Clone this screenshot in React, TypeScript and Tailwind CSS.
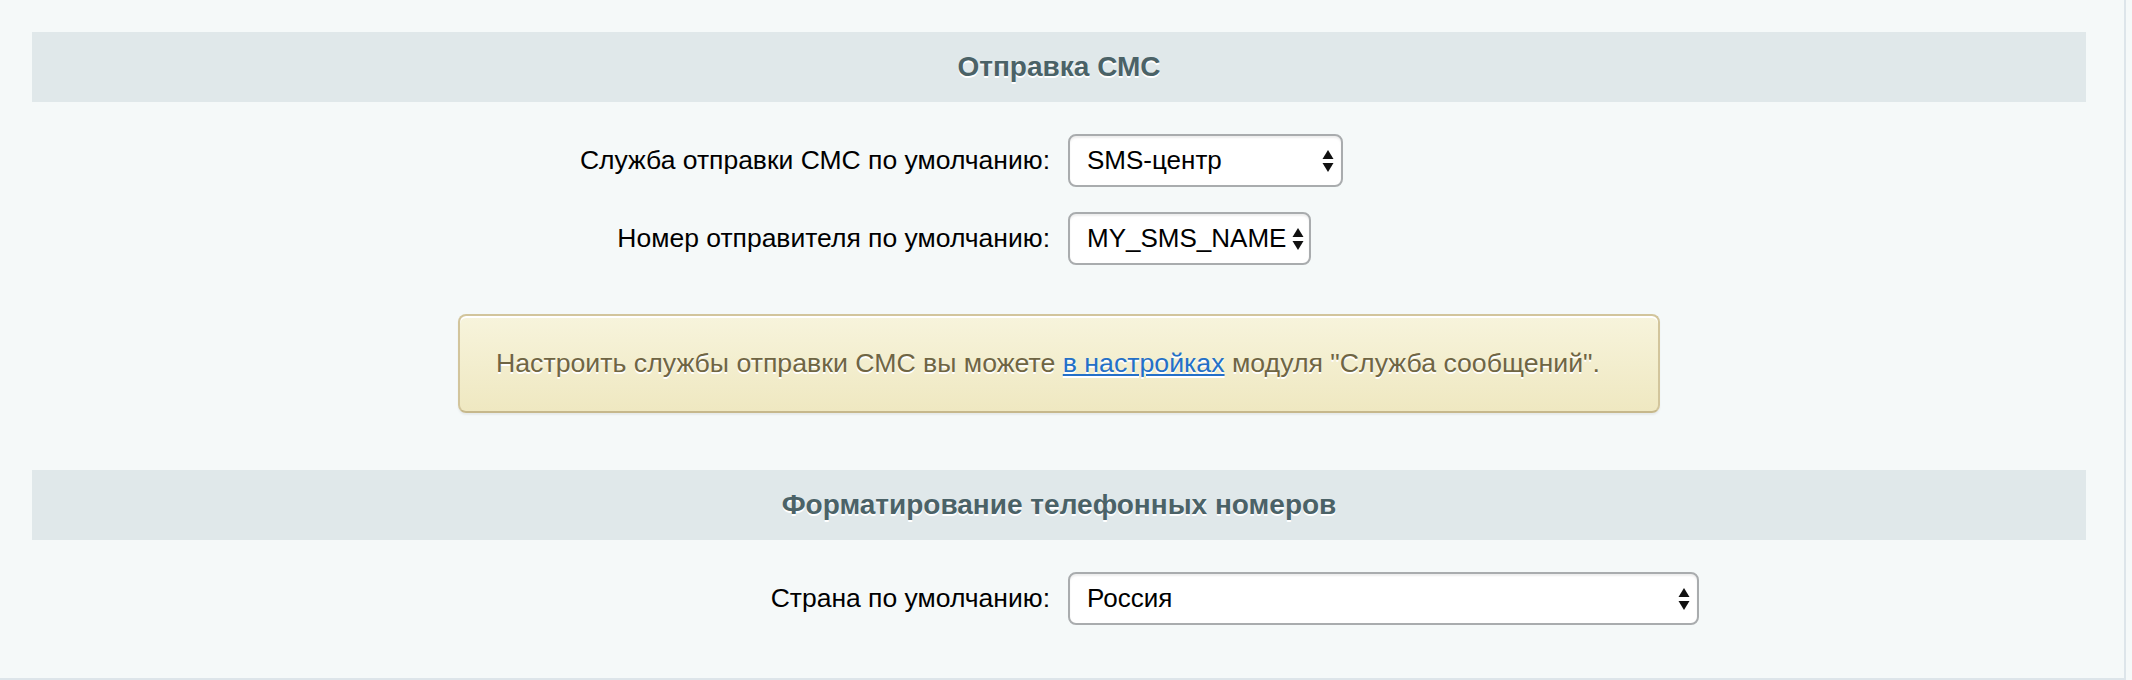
import { useState } from "react"

const font = "font-['Liberation_Sans',Arial,Helvetica,sans-serif]"

function Arrows({ right }: { right: string }) {
  return (
    <svg
      width="12"
      height="22"
      viewBox="0 0 12 22"
      className={`pointer-events-none absolute top-1/2 -translate-y-1/2 ${right}`}
    >
      <polygon points="0.5,9 6,0 11.5,9" fill="#111" />
      <polygon points="0.5,13 11.5,13 6,22" fill="#111" />
    </svg>
  )
}

function Select({
  width,
  value,
  options,
  tight = false,
}: {
  width: string
  value: string
  options: string[]
  tight?: boolean
}) {
  const [v, setV] = useState(value)
  return (
    <div className={`relative ${width}`}>
      <select
        value={v}
        onChange={(e) => setV(e.target.value)}
        className={`${font} h-[53px] w-full appearance-none rounded-[8px] border-2 border-[#a9acae] bg-white pl-[17px] text-[26px] text-black shadow-[inset_0_2px_2px_rgba(0,0,0,0.07)] outline-none ${
          tight ? "pr-[16px]" : "pr-[30px]"
        }`}
      >
        {options.map((o) => (
          <option key={o} value={o}>
            {o}
          </option>
        ))}
      </select>
      <Arrows right={tight ? "right-[7px]" : "right-[9px]"} />
    </div>
  )
}

function Row({ label, children }: { label: string; children: React.ReactNode }) {
  return (
    <div className="grid grid-cols-2 items-center">
      <div className="pr-[9px] text-right text-[26.5px] text-black">{label}</div>
      <div className="pl-[9px]">{children}</div>
    </div>
  )
}

function Heading({ title }: { title: string }) {
  return (
    <div className="flex h-[70px] items-center justify-center bg-[#e0e8ea] text-[28px] font-bold text-[#4b6267] [text-shadow:0_2px_0_#ffffff]">
      {title}
    </div>
  )
}

export default function App() {
  return (
    <div className={`${font} h-[680px] w-full bg-[#f5f9f9]`}>
      <div className="h-[680px] w-[2126px] border-r-2 border-b-2 border-[#dde5ea] bg-[#f5f9f9] pl-[32px] pr-[38px] pt-[32px]">
        <Heading title="Отправка СМС" />

        <div className="mt-[32px] flex flex-col gap-[25px]">
          <Row label="Служба отправки СМС по умолчанию:">
            <Select width="w-[275px]" value="SMS-центр" options={["SMS-центр", "SMS.ru"]} />
          </Row>
          <Row label="Номер отправителя по умолчанию:">
            <Select width="w-[243px]" value="MY_SMS_NAME" options={["MY_SMS_NAME"]} tight />
          </Row>
        </div>

        <div className="mx-auto mt-[49px] flex h-[99px] w-[1202px] items-center rounded-[8px] border-2 border-[#d2c59c] border-b-[#c6b88c] bg-gradient-to-b from-[#f7f4dc] to-[#efe8c1] pl-[36px] text-[26.7px] text-[#6f6544] shadow-[inset_0_2px_0_#ffffff,0_2px_2px_rgba(0,0,0,0.06)] [text-shadow:0_2px_0_#ffffff]">
          <span>
            Настроить службы отправки СМС вы можете{" "}
            <a href="#" className="text-[#2470c8] underline">
              в настройках
            </a>{" "}
            модуля "Служба сообщений".
          </span>
        </div>

        <div className="mt-[57px]">
          <Heading title="Форматирование телефонных номеров" />
        </div>

        <div className="mt-[32px]">
          <Row label="Страна по умолчанию:">
            <Select width="w-[631px]" value="Россия" options={["Россия", "Украина", "Беларусь", "Казахстан"]} />
          </Row>
        </div>
      </div>
    </div>
  )
}
